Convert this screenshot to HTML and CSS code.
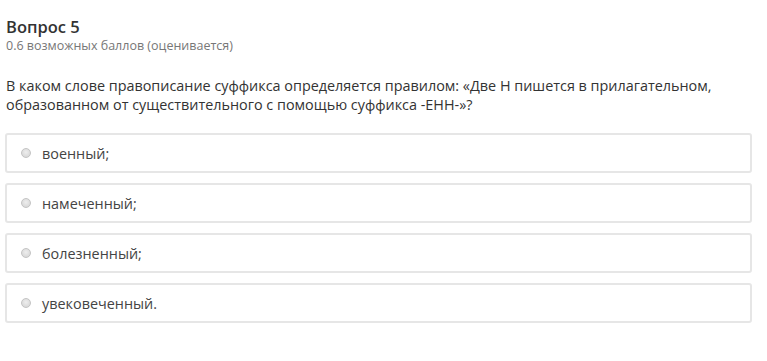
FILE: index.html
```html
<!DOCTYPE html>
<html lang="ru">
<head>
    <meta charset="UTF-8">
    <title>Вопрос 5</title>
    <link rel="stylesheet" href="styles.css">
</head>
<body>
    <div class="question">
        <div class="q_head">
            <h3 class="q_title">Вопрос 5</h3>
            <div class="q_points">0.6 возможных баллов (оценивается)</div>
        </div>
        <p class="q_text">В каком слове правописание суффикса определяется правилом: «Две Н пишется в прилагательном, образованном от существительного с помощью суффикса -ЕНН-»?</p>
        <div class="answers">
            <label class="answer"><span class="radio"></span>военный;</label>
            <label class="answer"><span class="radio"></span>намеченный;</label>
            <label class="answer"><span class="radio"></span>болезненный;</label>
            <label class="answer"><span class="radio"></span>увековеченный.</label>
        </div>
    </div>
</body>
</html>
```

FILE: styles.css
```css
* {
    margin: 0;
    padding: 0;
    box-sizing: border-box;
}
body {
    background: #fff;
    font-family: "Open Sans", "Liberation Sans", sans-serif;
    color: #333;
}
.question {
    padding: 16px 15px 0 5px;
}
.q_head {
    padding-left: 1px;
}
.q_title {
    font-size: 16.5px;
    font-weight: 600;
    line-height: 22px;
    color: #333;
}
.q_points {
    font-size: 12.5px;
    line-height: 16px;
    color: #777;
}
.q_text {
    margin: 22px 0 0 1px;
    font-size: 14.4px;
    line-height: 19px;
    color: #333;
}
.answers {
    margin-top: 19px;
    display: flex;
    flex-direction: column;
    gap: 10px;
}
.answer {
    display: flex;
    align-items: center;
    height: 40px;
    padding-left: 14px;
    border: 2px solid #e6e6e6;
    border-radius: 3px;
    font-size: 14.4px;
    color: #444;
}
.radio {
    width: 10px;
    height: 10px;
    margin-right: 11px;
    border-radius: 50%;
    border: 1px solid #c4c4c4;
    background: radial-gradient(circle at 50% 40%, #eee, #d2d2d2);
}
```
